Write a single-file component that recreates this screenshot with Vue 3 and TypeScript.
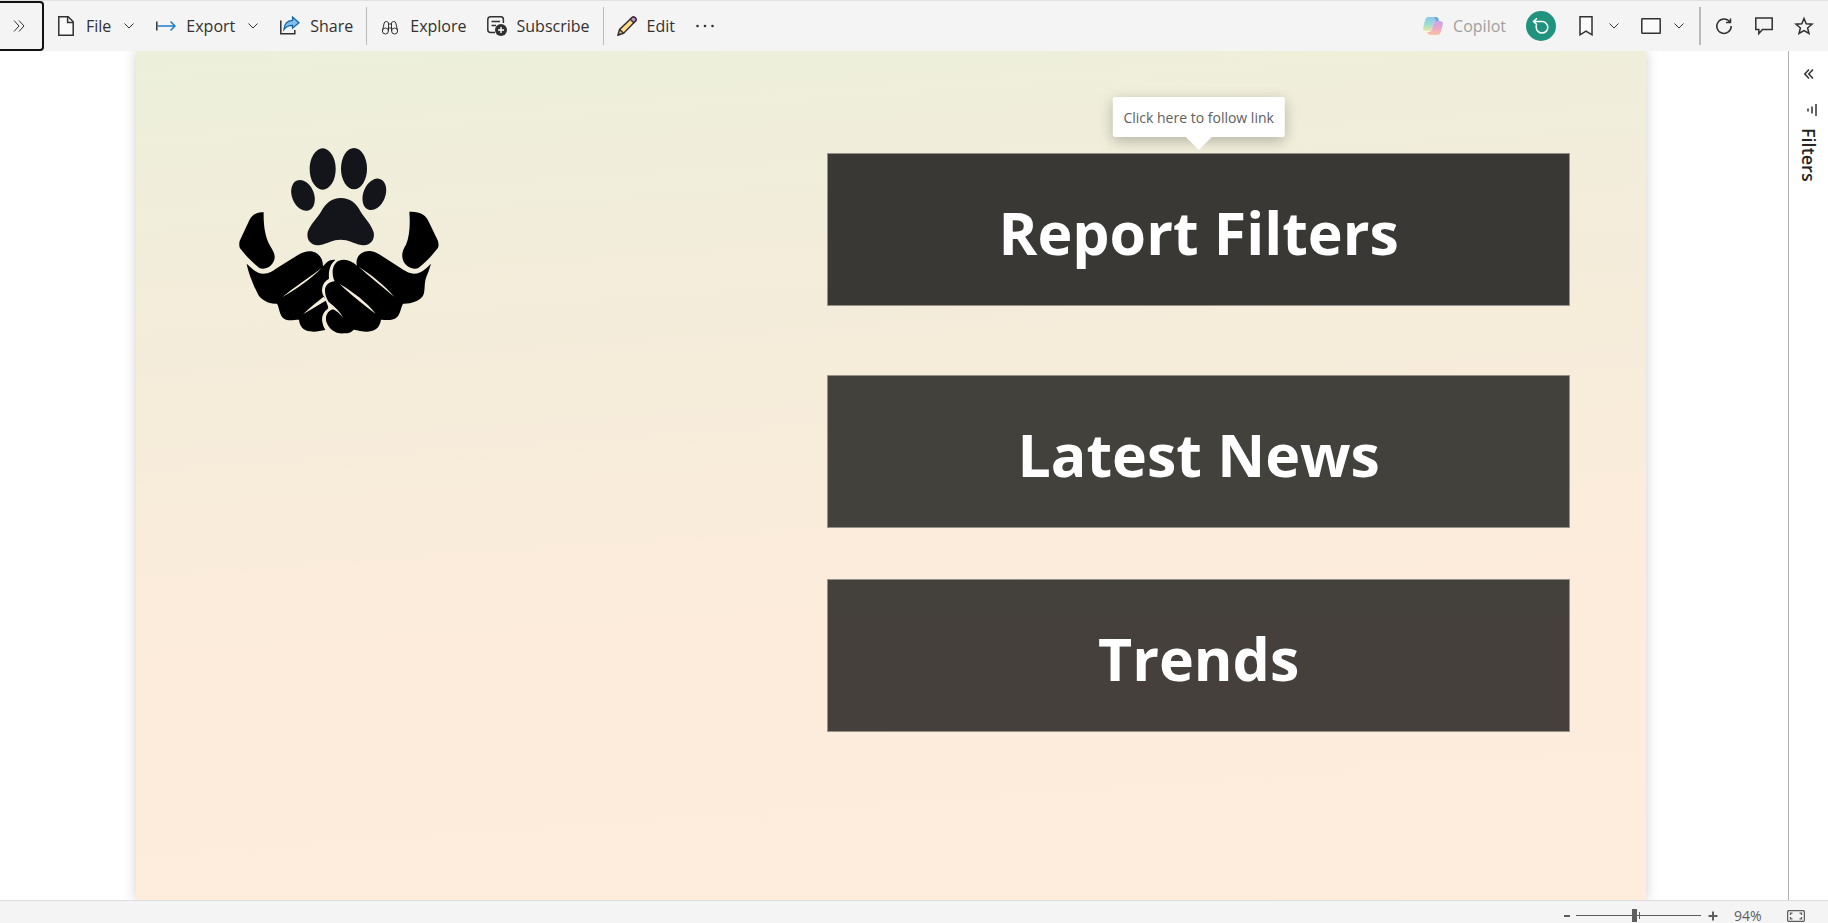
<script setup lang="ts">
import { ref } from 'vue'

interface PageLink {
  label: string
  tone: string
  hint?: string
}

const links: PageLink[] = [
  { label: 'Report Filters', tone: 'dark', hint: 'Click here to follow link' },
  { label: 'Latest News', tone: 'mid' },
  { label: 'Trends', tone: 'warm' },
]

const zoom = ref<number>(94)
const step = (delta: number) => {
  zoom.value = Math.min(200, Math.max(0, Number(zoom.value) + delta))
}
</script>

<template>
  <div class="app">
    <header class="toolbar">
      <button class="expand" aria-label="Expand navigation">
        <svg width="12" height="14" viewBox="0 0 12 14"><path d="M1 1.5 6 7 1 12.5M6 1.5 11 7 6 12.5" /></svg>
      </button>
      <nav class="group start" aria-label="Report actions">
        <button class="item">
          <svg class="icon" viewBox="0 0 20 20"><path class="thick paper" d="M2.8.8h9.4l5 5v13.400H2.800z" /><path class="thick" d="M11.600 1v5.400h5.400" /></svg>
          <span>File</span>
          <svg class="chev" viewBox="0 0 12 12"><path d="M1.500 3.500 6 8l4.500-4.500" /></svg>
        </button>
        <button class="item">
          <svg class="icon" viewBox="0 0 20 20"><path class="thick" d="M.8 5.500v9" /><path class="blue" d="M1.500 10H19M14.500 5.500 19 10l-4.500 4.500" /></svg>
          <span>Export</span>
          <svg class="chev" viewBox="0 0 12 12"><path d="M1.500 3.500 6 8l4.500-4.500" /></svg>
        </button>
        <button class="item">
          <svg class="icon" viewBox="0 0 20 20"><path class="thick" d="M.8 4.500v13.200h14V14" /><path class="arrow" d="M12.500 1 19 6.800l-6.500 5.400V9.300c-4 0-6.600 1.200-8.600 4.300.3-5 3.200-8.800 8.600-9.200z" /></svg>
          <span>Share</span>
        </button>
        <i class="sep"></i>
        <button class="item">
          <svg class="icon" viewBox="0 0 20 20"><path d="M2.500 14.500 4.200 7q.4-1.500 2.100-1.500T8.500 7v8M17.500 14.500 15.800 7q-.4-1.500-2.100-1.500T11.500 7v8M8.500 8h3M8.500 12h3" /><circle cx="5.400" cy="15" r="3" /><circle cx="14.600" cy="15" r="3" /></svg>
          <span>Explore</span>
        </button>
        <button class="item">
          <svg class="icon" viewBox="0 0 20 20"><path class="thick" d="M8 16.500H3.500q-2.700 0-2.700-2.700V3.500Q.8.800 3.500.800h10.200q2.700 0 2.700 2.700V7M4.500 5.500h8.500M4.500 9.500h4.500" /><circle class="solid" cx="14" cy="14" r="6" /><path class="plus" d="M14 11v6M11 14h6" /></svg>
          <span>Subscribe</span>
        </button>
        <i class="sep"></i>
        <button class="item">
          <svg class="icon" viewBox="0 0 20 20"><path class="pencil" d="m1 19 1.600-5.500L15 1.500q1.500-1.200 3.200.3T18.500 5L6.500 17.400z" /><path class="eraser" d="m13.300 3.200 2-1.900q1.400-.8 2.900.5t.5 3l-2 2z" /><path class="thick" d="m2.600 13.500 3.900 3.900M1 19l3-1" /></svg>
          <span>Edit</span>
        </button>
        <button class="item" aria-label="More options">
          <svg class="icon" viewBox="0 0 20 20"><g class="solid"><circle cx="2.500" cy="10" r="1.300" /><circle cx="10" cy="10" r="1.300" /><circle cx="17.500" cy="10" r="1.300" /></g></svg>
        </button>
      </nav>
      <nav class="group end" aria-label="View actions">
        <button class="item muted" disabled>
          <svg class="icon" viewBox="0 0 20 20">
            <defs>
              <linearGradient id="cool" x1="0" y1="0" x2="0" y2="1"><stop offset="0" stop-color="#8bc5ef" /><stop offset=".5" stop-color="#9bdcd4" /><stop offset="1" stop-color="#e8e6a0" /></linearGradient>
              <linearGradient id="warm" x1="0" y1="0" x2="0" y2="1"><stop offset="0" stop-color="#c6a5ee" /><stop offset=".5" stop-color="#eda5c8" /><stop offset="1" stop-color="#f9c4a5" /></linearGradient>
            </defs>
            <path fill="url(#warm)" stroke="none" d="M12 5h4.500q4 0 3.300 3.500l-2 7.500q-.8 3-3.800 3H7q-2 0-3-3h2q2 0 2.600-2l2-7q.4-1.500 1.400-2z" />
            <path fill="url(#cool)" stroke="none" d="M5.500 1H13q2 0 2.500 2l.5 2h-3q-1.800 0-2.400 2l-1.800 6.500Q8.200 15 6.500 15H3.300Q-.7 15 .3 11l1.800-7q.9-3 3.400-3z" />
            <path fill="#4e7fe0" opacity=".5" stroke="none" d="M10.500 1H13q2 0 2.500 2l.5 2h-3q-1.300-4-2.500-4z" />
          </svg>
          <span>Copilot</span>
        </button>
        <button class="item" aria-label="Reset filters">
          <svg class="badge" viewBox="0 0 30 30"><circle cx="15" cy="15" r="15" /><path d="M7.500 10.500h8.500a5.800 5.800 0 1 1-5.800 5.800V14M11 7.300 7.500 10.500l3.500 3.200" /></svg>
        </button>
        <button class="item" aria-label="Bookmarks">
          <svg class="icon" viewBox="0 0 20 20"><path class="thick paper" d="M4 .8h12v18l-6-3.600-6 3.600z" /></svg>
          <svg class="chev" viewBox="0 0 12 12"><path d="M1.500 3.500 6 8l4.500-4.500" /></svg>
        </button>
        <button class="item" aria-label="View">
          <svg class="icon" viewBox="0 0 20 20"><rect class="thick paper" x=".8" y="2.800" width="18.400" height="14.400" rx=".5" /></svg>
          <svg class="chev" viewBox="0 0 12 12"><path d="M1.500 3.500 6 8l4.500-4.500" /></svg>
        </button>
        <i class="sep wide"></i>
        <button class="item" aria-label="Refresh">
          <svg class="icon" viewBox="0 0 20 20"><path class="thick" d="M16 6.200A7.200 7.200 0 1 0 17.200 10M16.500 2.500v4h-4.500" /></svg>
        </button>
        <button class="item" aria-label="Comment">
          <svg class="icon" viewBox="0 0 20 20"><path class="thick" d="M1.800 2h16.400v11.500H8.500L4.800 17.500v-4h-3z" /></svg>
        </button>
        <button class="item" aria-label="Favorite">
          <svg class="icon" viewBox="0 0 20 20"><path class="thick" d="m10 2.500 2.200 5.300 5.800.4-4.400 3.700 1.400 5.600-5-3-5 3 1.400-5.600L2 8.200l5.800-.4z" /></svg>
        </button>
      </nav>
    </header>

    <div class="body">
      <main class="stage">
        <section class="report">
          <svg class="logo" viewBox="57 55 600 558" role="img" aria-label="Hands holding a paw">
            <g fill="#14151b">
              <ellipse cx="308" cy="118" rx="39" ry="62" />
              <ellipse cx="402" cy="117" rx="39" ry="62" />
              <ellipse cx="249" cy="197" rx="33" ry="48" transform="rotate(-22 249 197)" />
              <ellipse cx="463" cy="194" rx="33" ry="49" transform="rotate(22 463 194)" />
              <path d="M362 205C390 205 408 220 422 246C436 268 455 286 461 308C466 334 448 350 424 346C400 341 386 330 362 330C338 330 324 341 300 346C276 350 258 334 263 308C269 286 290 268 303 246C318 220 336 205 362 205Z" />
            </g>
            <path d="M131 248C130 285 135 322 149 346C159 362 167 375 163 390C158 409 136 422 118 415C98 399 76 377 60 356C57 350 57 338 60 332L88 272C98 252 112 248 131 248Z" />
            <path d="M568 246C571 283 569 320 558 345C549 358 543 375 549 391C555 410 576 421 594 416C614 400 637 377 653 356C657 350 656 340 653 332L624 272C615 250 590 246 568 246Z" />
            <path d="M80 402C97 417 108 431 130 432C148 432 160 423 176 412L235 375C254 363 275 361 289 370C303 379 309 392 309 410C320 397 331 388 346 391C331 403 325 421 327 447C314 454 307 465 306 480C306 490 309 497 313 502L326 535C310 546 304 562 307 577Q309 591 316 601C300 603 286 609 270 605C251 603 239 591 237 570C222 570 205 576 192 567C177 556 179 535 171 522C149 525 125 511 115 496C102 471 85 430 80 402Z" />
            <path d="M633 402C617 417 605 431 583 432C566 432 552 422 537 412L480 375C462 362 440 360 425 370C411 379 407 395 411 408C395 393 374 385 355 394C337 403 333 433 344 455C330 455 315 466 315 482C315 505 327 518 341 539C325 541 314 558 319 576C327 598 346 614 374 611Q393 611 401 600C418 603 438 609 454 604C472 600 480 588 483 570C498 570 515 574 528 565C541 555 541 538 549 522C572 523 596 516 608 500C617 486 611 462 619 442Q627 423 633 402Z" />
            <g fill="#f4eddb">
              <path d="M306 414C267 443 219 475 187 502C229 478 274 447 306 414Z" />
              <path d="M311 501C290 517 267 536 250 553C274 539 298 525 320 512Z" />
              <path d="M416 411C449 441 491 475 523 501C495 468 454 435 416 411Z" />
              <path d="M359 463C391 494 432 527 467 552C440 518 400 487 359 463Z" />
              <path d="M324 536C342 535 356 549 370 565C360 547 345 532 327 518Z" />
            </g>
          </svg>
          <div class="links">
            <div v-for="link in links" :key="link.label" class="slot">
              <a href="#" class="card" :class="link.tone">{{ link.label }}</a>
              <div v-if="link.hint" class="tip" role="tooltip">{{ link.hint }}</div>
            </div>
          </div>
        </section>
      </main>
      <aside class="filters">
        <button aria-label="Expand filters">
          <svg width="10" height="10" viewBox="0 0 10 10"><path class="thick" d="M5 .5.800 5 5 9.500M9 .5 4.800 5 9 9.500" /></svg>
        </button>
        <svg class="bars" width="10" height="12" viewBox="0 0 10 12"><path class="thick" d="M9 0v12M5 2.500v7M1 4.500v3" /></svg>
        <h2>Filters</h2>
      </aside>
    </div>

    <footer class="status">
      <button class="sign" aria-label="Zoom out" @click="step(-1)"><svg width="10" height="10" viewBox="0 0 10 10"><path d="M2 5h6" /></svg></button>
      <div class="track">
        <input v-model="zoom" type="range" min="0" max="200" aria-label="Zoom level" />
      </div>
      <button class="sign" aria-label="Zoom in" @click="step(1)"><svg width="10" height="10" viewBox="0 0 10 10"><path d="M.5 5h9M5 .5v9" /></svg></button>
      <span class="percent">{{ zoom }}%</span>
      <button class="fit" aria-label="Fit to page">
        <svg width="18" height="12" viewBox="0 0 18 12"><rect x=".6" y=".6" width="16.800" height="10.800" rx="1.500" /><path d="M3.500 5V3.200h2M12.500 3.200h2V5M14.500 7v1.800h-2M5.500 8.800h-2V7" /></svg>
      </button>
    </footer>
  </div>
</template>

<style>
body {
  margin: 0;
}
</style>

<style scoped>
.app {
  display: flex;
  flex-direction: column;
  height: 100vh;
  overflow: hidden;
  background: #fff;
  color: #323130;
  font-family: 'Open Sans', 'Noto Sans', sans-serif;
  font-size: 16px;
}
button {
  display: flex;
  align-items: center;
  justify-content: center;
  margin: 0;
  padding: 0;
  border: 0;
  background: none;
  color: inherit;
  font: inherit;
  cursor: pointer;
}
svg {
  display: block;
  flex: none;
}
.toolbar svg,
.filters svg,
.status svg {
  fill: none;
  stroke: #323130;
  stroke-width: 1;
}
.thick {
  stroke-width: 1.5;
}
.toolbar {
  display: flex;
  flex: none;
  align-items: stretch;
  box-sizing: border-box;
  height: 51px;
  border-top: 1px solid #e1e1e1;
  background: #f4f4f4;
}
.expand {
  box-sizing: border-box;
  width: 44px;
  padding-right: 5px;
  border: 2px solid #111;
  border-left: 0;
  border-radius: 0 4px 4px 0;
}
.group {
  display: flex;
  align-items: center;
}
.start {
  padding-left: 2px;
}
.end {
  margin-left: auto;
  padding-right: 4px;
}
.item {
  gap: 10px;
  height: 40px;
  padding: 0 10px;
  white-space: nowrap;
}
.icon {
  width: 20px;
  height: 20px;
}
.chev {
  width: 12px;
  height: 12px;
  margin: 0 1px 0 2px;
}
.paper {
  fill: #fafafa;
}
.blue {
  stroke: #1b80c9;
  stroke-width: 1.5;
}
.arrow {
  fill: #83beec;
  stroke: #1065a8;
  stroke-width: 1.2;
}
.solid {
  fill: #323130;
  stroke: none;
}
.plus {
  stroke: #fff;
  stroke-width: 1.4;
}
.pencil {
  fill: #ffd98a;
  stroke-width: 1.5;
}
.eraser {
  fill: #c58fd0;
  stroke-width: 1.3;
}
.muted {
  color: #a19f9d;
}
.badge {
  width: 30px;
  height: 30px;
}
.badge circle {
  fill: #1f937d;
  stroke: none;
}
.badge path {
  stroke: #fff;
  stroke-width: 1.5;
}
.sep {
  width: 1px;
  height: 38px;
  margin: 0 3px;
  background: #bdbbb9;
}
.wide {
  width: 2px;
}
.body {
  display: flex;
  flex: 1;
  min-height: 0;
}
.stage {
  display: flex;
  flex: 1;
  overflow: hidden;
  padding: 0 142px 0 136px;
}
.report {
  display: flex;
  flex: 1;
  justify-content: space-between;
  box-sizing: border-box;
  padding: 97px 76px 0 103px;
  background: linear-gradient(176deg, #ecf0da 0%, #f0eeda 14%, #f5ecda 36%, #fdecdc 64%, #feecdc 100%);
  box-shadow: 0 0 12px rgba(0, 0, 0, 0.2);
}
.logo {
  width: 200px;
  height: 186px;
}
.links {
  display: flex;
  flex-direction: column;
  width: 55.8%;
  padding-top: 5px;
}
.slot {
  position: relative;
  margin-bottom: 69px;
}
.slot + .slot {
  margin-bottom: 51px;
}
.card {
  display: flex;
  align-items: center;
  justify-content: center;
  box-sizing: border-box;
  height: 153px;
  padding-top: 5px;
  border: 1px solid #96928a;
  color: #fff;
  font-size: 59px;
  font-weight: 700;
  line-height: 80px;
  text-decoration: none;
}
.dark {
  background: #3a3834;
}
.mid {
  background: #43413c;
}
.warm {
  background: linear-gradient(#43413c, #46403c 40%);
}
.tip {
  position: absolute;
  bottom: 100%;
  left: 50%;
  margin-bottom: 16px;
  padding: 11px 11px 9px;
  border-radius: 2px;
  background: #fff;
  box-shadow: 0 4px 14px rgba(0, 0, 0, 0.25);
  color: #605e5c;
  font-size: 14px;
  line-height: 20px;
  white-space: nowrap;
  transform: translateX(-50%);
}
.tip::after {
  position: absolute;
  top: 100%;
  left: 50%;
  margin-left: -13px;
  border: 13px solid transparent;
  border-top-color: #fff;
  border-bottom: 0;
  content: '';
}
.filters {
  display: flex;
  flex: none;
  flex-direction: column;
  align-items: center;
  box-sizing: border-box;
  width: 40px;
  padding-top: 18px;
  border-left: 1px solid #b3b0ad;
}
.bars {
  margin: 25px 0 12px 7px;
}
.filters h2 {
  margin: 0;
  color: #252423;
  font-size: 18px;
  font-weight: 600;
  line-height: 24px;
  writing-mode: vertical-rl;
}
.status {
  display: flex;
  flex: none;
  align-items: center;
  justify-content: flex-end;
  box-sizing: border-box;
  height: 23px;
  padding: 7px 23px 0 0;
  border-top: 1px solid #dcdcdc;
  background: #f4f4f4;
  color: #605e5c;
  font-size: 14px;
  line-height: 16px;
}
.status svg {
  stroke: #605e5c;
}
.sign svg {
  stroke-width: 2;
}
.track {
  position: relative;
  display: flex;
  width: 125px;
  margin: 0 7px 0 4px;
}
.track::after {
  position: absolute;
  top: 3px;
  left: 50%;
  width: 1px;
  height: 7px;
  background: #605e5c;
  content: '';
}
.track input {
  width: 100%;
  height: 13px;
  margin: 0;
  appearance: none;
  background: linear-gradient(#605e5c, #605e5c) center / 100% 1px no-repeat;
}
.track input::-webkit-slider-thumb {
  width: 5px;
  height: 13px;
  appearance: none;
  background: #605e5c;
}
.percent {
  width: 30px;
  margin: 0 23px 0 16px;
}
.fit svg {
  stroke-width: 1.3;
}
</style>
